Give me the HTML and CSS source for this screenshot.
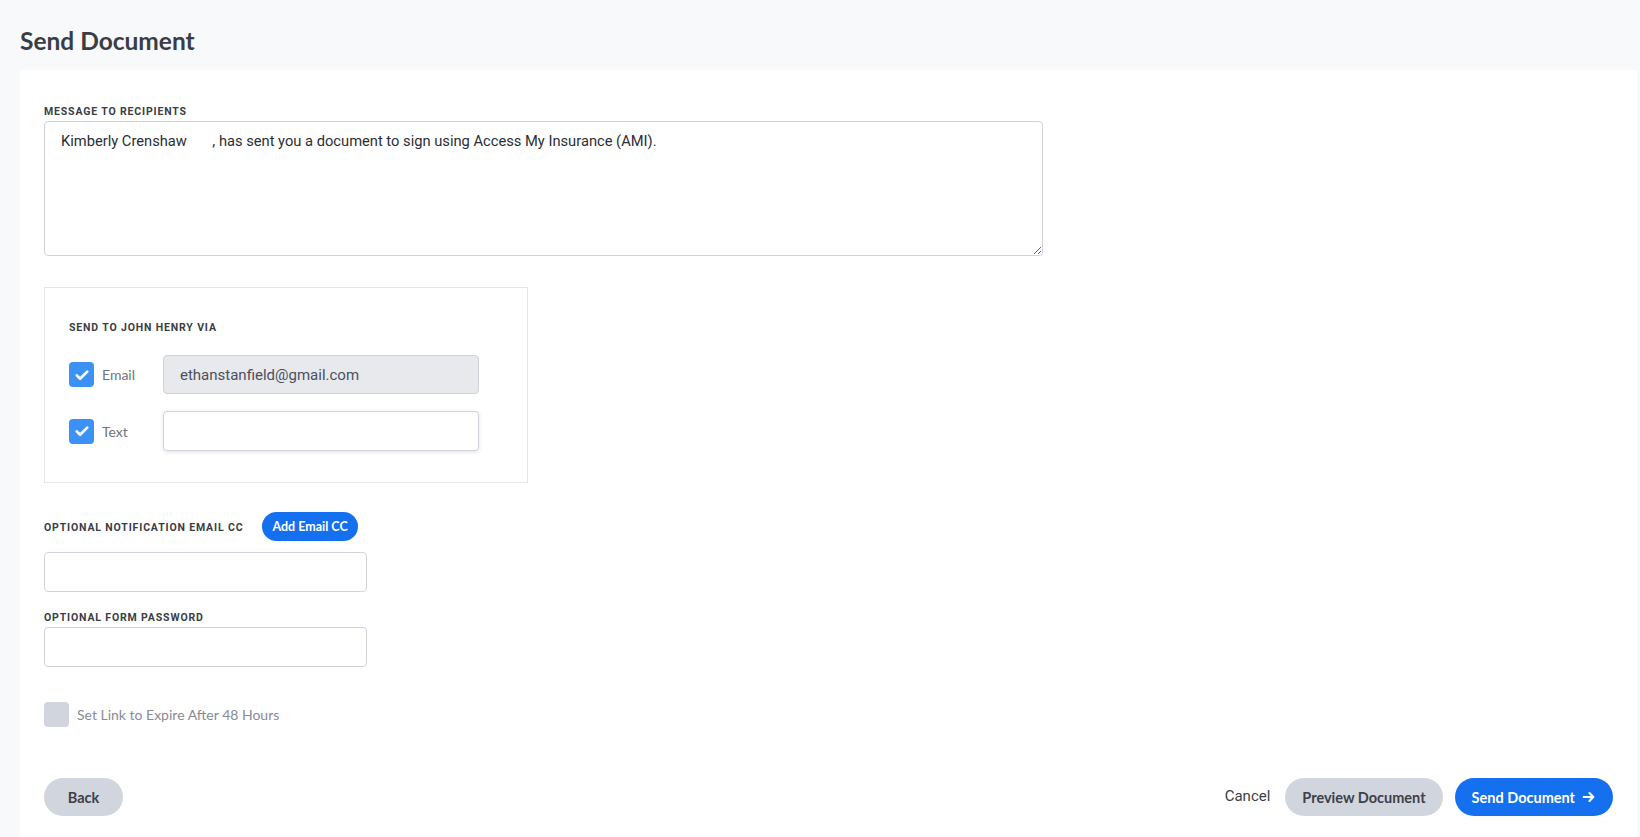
FILE: index.html
```html
<!doctype html>
<html>
<head>
    <meta charset="utf-8">
    <title>Send Document</title>
    <link rel="stylesheet" href="styles.css">
</head>
<body>
    <div class="pagehead">
        <h1>Send Document</h1>
    </div>

    <div class="card">
        <label class="fieldlabel">Message to Recipients</label>
        <textarea class="message">Kimberly Crenshaw       , has sent you a document to sign using Access My Insurance (AMI).</textarea>

        <div class="viabox">
            <label class="fieldlabel">Send to John Henry via</label>
            <div class="viarow">
                <span class="check on">
                    <svg viewBox="0 0 24 24" width="18" height="18"><path d="M5 12.5l4.5 4.5L19 7.5" fill="none" stroke="#fff" stroke-width="3.6" stroke-linecap="round" stroke-linejoin="round"/></svg>
                </span>
                <span class="viatext">Email</span>
                <input class="textbox filled" type="text" value="ethanstanfield@gmail.com" readonly>
            </div>
            <div class="viarow">
                <span class="check on">
                    <svg viewBox="0 0 24 24" width="18" height="18"><path d="M5 12.5l4.5 4.5L19 7.5" fill="none" stroke="#fff" stroke-width="3.6" stroke-linecap="round" stroke-linejoin="round"/></svg>
                </span>
                <span class="viatext">Text</span>
                <input class="textbox raised" type="text">
            </div>
        </div>

        <div class="ccrow">
            <label class="fieldlabel">Optional Notification Email CC</label>
            <button class="pill small blue">Add Email CC</button>
        </div>
        <input class="textbox short" type="text">

        <label class="fieldlabel pwlabel">Optional Form Password</label>
        <input class="textbox short" type="password">

        <div class="expire">
            <span class="check"></span>
            <span class="expiretext">Set Link to Expire After 48 Hours</span>
        </div>

        <div class="actions">
            <button class="pill grey">Back</button>
            <div class="right">
                <a class="cancel" href="#">Cancel</a>
                <button class="pill grey">Preview Document</button>
                <button class="pill blue">Send Document
                    <svg viewBox="0 0 16 16" width="14" height="14"><path d="M2 8h11M8.5 3.5L13 8l-4.5 4.5" fill="none" stroke="#fff" stroke-width="2.4" stroke-linecap="round" stroke-linejoin="round"/></svg>
                </button>
            </div>
        </div>
    </div>
</body>
</html>
```

FILE: styles.css
```css
html, body {
    margin: 0;
    background-color: #f8f9fb;
    font-family: 'Roboto', sans-serif;
    color: #3a3d45;
}

.pagehead {
    height: 70px;
    padding-left: 20px;
    box-sizing: border-box;
    display: flex;
    align-items: center;
}

.pagehead h1 {
    margin: 0;
    padding-top: 10px;
    font-family: 'Lato', sans-serif;
    font-size: 24.5px;
    font-weight: 700;
    color: #3a3d45;
}

.card {
    background: #fff;
    margin: 0 3px 0 20px;
    padding: 35px 24px 30px 24px;
    display: flex;
    flex-direction: column;
    align-items: flex-start;
}

.fieldlabel {
    display: block;
    font-family: 'Roboto', sans-serif;
    font-size: 10.5px;
    line-height: 14px;
    font-weight: 700;
    letter-spacing: 0.85px;
    text-transform: uppercase;
    color: #3a3d45;
    margin-bottom: 2px;
}

.message {
    width: 999px;
    height: 135px;
    box-sizing: border-box;
    border: 1px solid #d0d3dc;
    border-radius: 4px;
    padding: 10px 16px;
    font-family: 'Roboto', sans-serif;
    font-size: 14.7px;
    color: #2b2e35;
    white-space: pre;
    resize: both;
}

.viabox {
    width: 484px;
    box-sizing: border-box;
    margin-top: 31px;
    border: 1px solid #e4e6ea;
    padding: 33px 24px 31px 24px;
}

.viabox .fieldlabel {
    margin-bottom: 20px;
}

.viarow {
    display: flex;
    align-items: center;
}

.viarow + .viarow {
    margin-top: 17px;
}

.check {
    width: 25px;
    height: 25px;
    border-radius: 4px;
    background: #d1d5dd;
    display: flex;
    align-items: center;
    justify-content: center;
    flex-shrink: 0;
}

.check.on {
    background: #3b91f6;
}

.viatext {
    width: 61px;
    margin-left: 8px;
    font-family: 'Lato', sans-serif;
    font-size: 14px;
    color: #70747d;
}

.textbox {
    height: 40px;
    box-sizing: border-box;
    border: 1px solid #d0d3dc;
    border-radius: 4px;
    background: #fff;
    padding: 0 16px;
    font-family: 'Roboto', sans-serif;
    font-size: 15px;
    color: #4b5060;
    outline: none;
}

.viarow .textbox {
    width: 316px;
}

.textbox.filled {
    height: 39px;
    background: #e8e9ec;
}

.textbox.raised {
    box-shadow: 0 1px 4px rgba(0, 0, 0, 0.12);
}

.textbox.short {
    width: 323px;
}

.ccrow {
    margin-top: 29px;
    margin-bottom: 11px;
    display: flex;
    align-items: center;
}

.ccrow .fieldlabel {
    margin: 3px 19px 0 0;
}

.pwlabel {
    margin-top: 19px;
}

.pill {
    height: 38px;
    border: none;
    border-radius: 19px;
    padding: 0 17px;
    font-family: 'Lato', sans-serif;
    font-size: 14.5px;
    font-weight: 700;
    cursor: pointer;
    display: inline-flex;
    align-items: center;
    gap: 7px;
}

.pill.small {
    height: 29px;
    border-radius: 15px;
    padding: 0 10px;
    font-size: 12.5px;
}

.pill.grey {
    background: #d1d5de;
    color: #3d4049;
}

.pill.blue {
    background: #1570ef;
    color: #fff;
}

.expire {
    margin-top: 35px;
    display: flex;
    align-items: center;
}

.expiretext {
    margin-left: 8px;
    font-family: 'Lato', sans-serif;
    font-size: 14px;
    color: #878b94;
}

.actions {
    align-self: stretch;
    margin-top: 51px;
    display: flex;
    justify-content: space-between;
    align-items: center;
}

.actions > .pill.grey {
    width: 79px;
    justify-content: center;
}

.right {
    display: flex;
    align-items: center;
    gap: 12px;
}

.cancel {
    margin-right: 3px;
    margin-bottom: 2px;
    font-family: 'Roboto', sans-serif;
    font-size: 15px;
    color: #3a3d45;
    text-decoration: none;
}
```
